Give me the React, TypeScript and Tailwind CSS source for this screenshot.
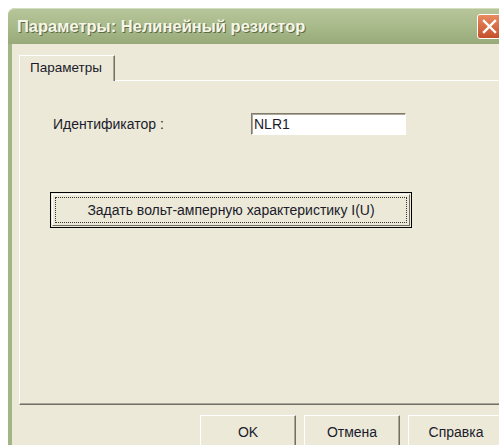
import type { ReactNode } from "react";

const UI = { fontFamily: '"Liberation Sans", Arial, sans-serif' };

// Кнопка в стиле XP (оливковая тема): светлый верх/лево, тень снизу/справа
function XpButton({ children, className = "" }: { children: ReactNode; className?: string }) {
  return (
    <div
      className={`flex items-center justify-center border border-t-white border-l-white border-r-[#716f64] border-b-[#716f64] bg-[#ece9d8] text-[14px] text-[#1b1b2b] shadow-[inset_-1px_-1px_0_#aca899] ${className}`}
    >
      {children}
    </div>
  );
}

function CloseButton() {
  return (
    <div className="ml-auto flex h-[25px] w-[25px] items-center justify-center rounded-[3px] border border-white bg-[#d9663d] bg-gradient-to-b from-[#e88a5f] to-[#c4502a]">
      <svg width="15" height="15" viewBox="0 0 15 15">
        <path d="M2 2 L13 13 M13 2 L2 13" stroke="white" strokeWidth="2.4" strokeLinecap="square" />
      </svg>
    </div>
  );
}

export default function App() {
  return (
    <div className="h-[445px] w-[499px] overflow-hidden bg-white pl-[8px] pt-[8px]" style={UI}>
      <div className="flex h-[460px] w-[510px] flex-col rounded-t-[7px] bg-[#a4b585]">
        {/* заголовок окна */}
        <div className="flex h-[36px] items-center rounded-t-[7px] border-t border-[#d5dfbf] bg-gradient-to-b from-[#b7c69a] via-[#a8b98a] to-[#98aa79] pl-[9px] pr-[16px]">
          <span className="text-[16.5px] font-bold text-[#f6f6e8] [text-shadow:1px_1px_0_#5e6b45]">
            Параметры: Нелинейный резистор
          </span>
          <CloseButton />
        </div>

        <div className="ml-[4px] flex flex-1 flex-col bg-[#ece9d8] pl-[7px] pt-[11px]">
          {/* вкладка */}
          <div className="relative z-10 flex h-[26px] w-[96px] items-center border border-b-0 border-t-white border-l-white border-r-[#716f64] bg-[#ece9d8] pl-[10px] text-[13.5px] text-[#1b1b2b] shadow-[inset_-1px_0_0_#aca899]">
            Параметры
          </div>

          {/* панель вкладки */}
          <div className="-mt-px flex h-[325px] flex-col border border-t-white border-l-white border-r-[#716f64] border-b-[#716f64] shadow-[inset_0_-1px_0_#aca899]">
            <div className="mt-[32px] flex items-center">
              <span className="ml-[33px] w-[198px] text-[14px] text-[#1b1b2b]">Идентификатор :</span>
              <div className="flex h-[22px] w-[155px] items-center border border-t-[#7f7c6e] border-l-[#7f7c6e] border-r-white border-b-white bg-white pl-[2px] text-[14px] text-[#1b1b2b] shadow-[inset_1px_1px_0_#aca899]">
                NLR1
              </div>
            </div>

            <div className="ml-[30px] mt-[57px] h-[36px] w-[362px] border border-black p-px">
              <div className="flex h-full items-center justify-center border border-t-white border-l-white border-r-[#716f64] border-b-[#716f64] bg-[#ece9d8] p-[2px]">
                <div className="flex h-full w-full items-center justify-center border border-dotted border-[#333] text-[14px] text-[#1b1b2b]">
                  Задать вольт-амперную характеристику I(U)
                </div>
              </div>
            </div>
          </div>

          {/* кнопки диалога */}
          <div className="mt-[10px] flex gap-[8px] pl-[181px]">
            <XpButton className="h-[34px] w-[96px]">OK</XpButton>
            <XpButton className="h-[34px] w-[96px]">Отмена</XpButton>
            <XpButton className="h-[34px] w-[96px]">Справка</XpButton>
          </div>
        </div>
      </div>
    </div>
  );
}
